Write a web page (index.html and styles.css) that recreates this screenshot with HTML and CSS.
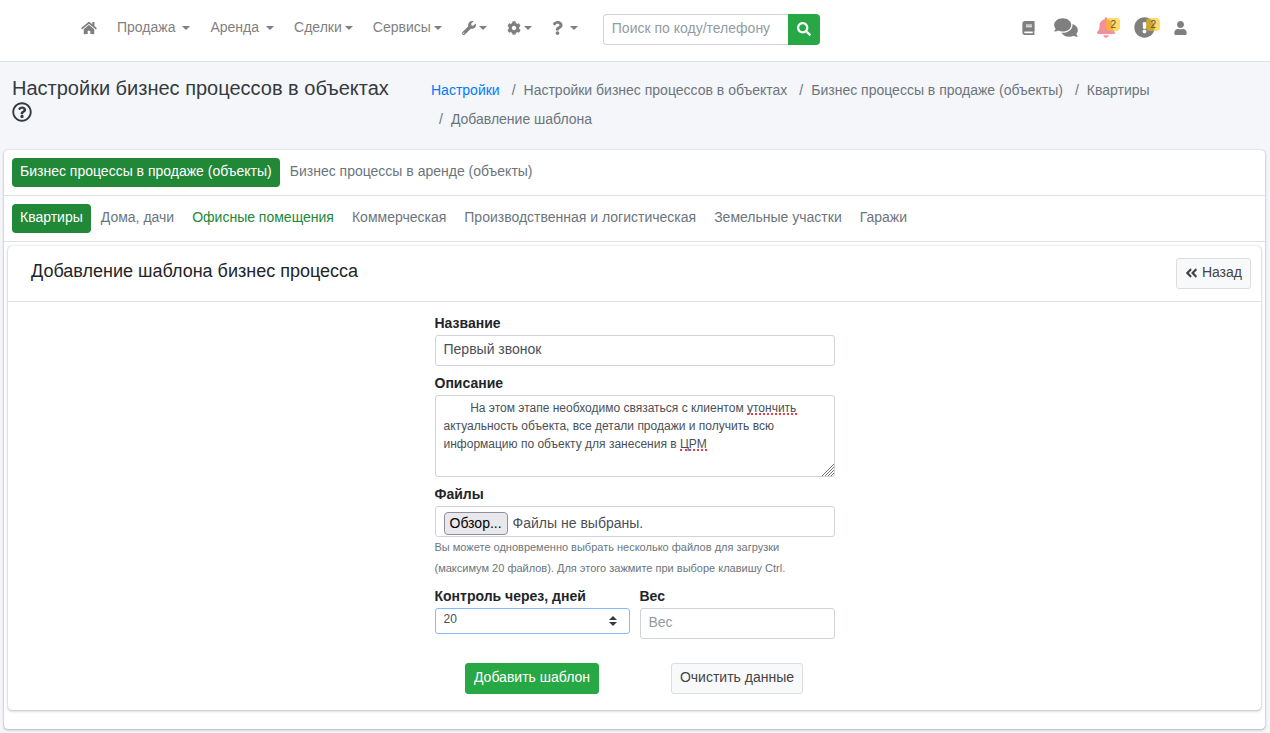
FILE: index.html
```html
<!DOCTYPE html>
<html lang="ru">
<head>
<meta charset="utf-8">
<meta name="viewport" content="width=device-width, initial-scale=1">
<title>Добавление шаблона</title>
<link rel="stylesheet" href="styles.css">
</head>
<body>
<header class="topbar">
  <nav class="menu" aria-label="Главное меню">
    <a class="menu-link" href="#" aria-label="Главная"><svg class="icon icon-home" viewBox="0 0 576 512"><path d="M280.37 148.26L96 300.11V464a16 16 0 0 0 16 16l112.06-.29a16 16 0 0 0 15.92-16V368a16 16 0 0 1 16-16h64a16 16 0 0 1 16 16v95.64a16 16 0 0 0 16 16.05L464 480a16 16 0 0 0 16-16V300L295.67 148.26a12.19 12.19 0 0 0-15.3 0zM571.6 251.47L488 182.56V44.05a12 12 0 0 0-12-12h-56a12 12 0 0 0-12 12v72.61L318.47 43a48 48 0 0 0-61 0L4.34 251.47a12 12 0 0 0-1.6 16.9l25.5 31A12 12 0 0 0 45.15 301l235.22-193.74a12.19 12.19 0 0 1 15.3 0L530.9 301a12 12 0 0 0 16.9-1.6l25.5-31a12 12 0 0 0-1.7-16.93z"/></svg></a>
    <a class="menu-link wide" href="#">Продажа<span class="caret"></span></a>
    <a class="menu-link wide" href="#">Аренда<span class="caret"></span></a>
    <a class="menu-link" href="#">Сделки<span class="caret"></span></a>
    <a class="menu-link" href="#">Сервисы<span class="caret"></span></a>
    <a class="menu-link" href="#" aria-label="Инструменты"><svg class="icon" viewBox="0 0 512 512"><path d="M507.73 109.1c-2.24-9.03-13.54-12.09-20.12-5.51l-74.36 74.36-67.88-11.31-11.31-67.88 74.36-74.36c6.62-6.62 3.43-17.9-5.66-20.16-47.38-11.74-99.55.91-136.58 37.93-39.64 39.64-50.55 97.1-34.05 147.2L18.74 402.76c-24.99 24.99-24.99 65.51 0 90.5 24.99 24.99 65.51 24.99 90.5 0l213.21-213.21c50.12 16.71 107.47 5.68 147.37-34.22 37.07-37.07 49.7-89.32 37.91-136.73zM64 472c-13.25 0-24-10.75-24-24 0-13.26 10.75-24 24-24s24 10.74 24 24c0 13.25-10.75 24-24 24z"/></svg><span class="caret"></span></a>
    <a class="menu-link" href="#" aria-label="Настройки"><svg class="icon" viewBox="0 0 512 512"><path d="M487.4 315.7l-42.6-24.6c4.3-23.2 4.3-47 0-70.2l42.6-24.6c4.9-2.8 7.1-8.6 5.5-14-11.1-35.6-30-67.8-54.7-94.6-3.8-4.1-10-5.1-14.8-2.3L380.8 110c-17.9-15.4-38.5-27.3-60.8-35.1V25.8c0-5.6-3.9-10.5-9.4-11.7-36.7-8.2-74.3-7.8-109.2 0-5.5 1.2-9.4 6.1-9.4 11.7V75c-22.2 7.9-42.8 19.8-60.8 35.1L88.7 85.5c-4.9-2.8-11-1.9-14.8 2.3-24.7 26.7-43.6 58.9-54.7 94.6-1.7 5.4.6 11.2 5.5 14L67.3 221c-4.3 23.2-4.3 47 0 70.2l-42.6 24.6c-4.9 2.8-7.1 8.6-5.5 14 11.1 35.6 30 67.8 54.7 94.6 3.8 4.1 10 5.1 14.8 2.3l42.6-24.6c17.9 15.4 38.5 27.3 60.8 35.1v49.2c0 5.6 3.9 10.5 9.4 11.7 36.7 8.2 74.3 7.8 109.2 0 5.5-1.2 9.4-6.1 9.4-11.7v-49.2c22.2-7.9 42.8-19.8 60.8-35.1l42.6 24.6c4.9 2.8 11 1.9 14.8-2.3 24.7-26.7 43.6-58.9 54.7-94.6 1.5-5.5-.7-11.3-5.6-14.1zM256 336c-44.1 0-80-35.9-80-80s35.9-80 80-80 80 35.9 80 80-35.9 80-80 80z"/></svg><span class="caret"></span></a>
    <a class="menu-link wide" href="#" aria-label="Помощь"><svg class="icon icon-question" viewBox="0 0 384 512"><path d="M202.021 0C122.202 0 70.503 32.703 29.914 91.026c-7.363 10.58-5.093 25.086 5.178 32.874l43.138 32.709c10.373 7.865 25.132 6.026 33.253-4.148 25.049-31.381 43.63-49.449 82.757-49.449 30.764 0 68.816 19.799 68.816 49.631 0 22.552-18.617 34.134-48.993 51.164-35.423 19.86-82.299 44.576-82.299 106.405V320c0 13.255 10.745 24 24 24h72.471c13.255 0 24-10.745 24-24v-5.773c0-42.86 125.268-44.645 125.268-160.627C377.504 66.256 286.902 0 202.021 0zM192 373.459c-38.196 0-69.271 31.075-69.271 69.271 0 38.195 31.075 69.27 69.271 69.27s69.271-31.075 69.271-69.271-31.075-69.27-69.271-69.27z"/></svg><span class="caret"></span></a>
  </nav>
  <form class="search">
    <input class="search-input" type="text" placeholder="Поиск по коду/телефону" aria-label="Поиск по коду или телефону">
    <button class="search-button" type="button" aria-label="Найти"><svg class="icon" viewBox="0 0 512 512"><path d="M505 442.7L405.3 343c-4.5-4.5-10.6-7-17-7H372c27.6-35.3 44-79.7 44-128C416 93.1 322.9 0 208 0S0 93.1 0 208s93.1 208 208 208c48.3 0 92.7-16.4 128-44v16.3c0 6.4 2.5 12.5 7 17l99.7 99.7c9.4 9.4 24.6 9.4 33.9 0l28.3-28.3c9.4-9.4 9.4-24.6.1-34zM208 336c-70.7 0-128-57.2-128-128 0-70.7 57.2-128 128-128 70.7 0 128 57.2 128 128 0 70.7-57.2 128-128 128z"/></svg></button>
  </form>
  <nav class="tools" aria-label="Панель пользователя">
    <a class="tool" href="#" aria-label="Справочник"><svg class="icon icon-book" viewBox="0 0 448 512"><path d="M448 360V24c0-13.3-10.7-24-24-24H96C43 0 0 43 0 96v320c0 53 43 96 96 96h328c13.3 0 24-10.7 24-24v-16c0-7.5-3.5-14.3-8.9-18.7-4.2-15.4-4.2-59.3 0-74.7 5.4-4.3 8.9-11.1 8.9-18.6zM128 134c0-3.3 2.7-6 6-6h212c3.3 0 6 2.7 6 6v20c0 3.3-2.7 6-6 6H134c-3.3 0-6-2.7-6-6v-20zm0 64c0-3.3 2.7-6 6-6h212c3.3 0 6 2.7 6 6v20c0 3.3-2.7 6-6 6H134c-3.3 0-6-2.7-6-6v-20zm253.4 250H96c-17.7 0-32-14.3-32-32 0-17.6 14.4-32 32-32h285.4c-1.9 17.1-1.9 46.9 0 64z"/></svg></a>
    <a class="tool" href="#" aria-label="Сообщения"><svg class="icon icon-comments" viewBox="0 0 576 512"><path d="M416 192c0-88.4-93.1-160-208-160S0 103.6 0 192c0 34.3 14.1 65.9 38 92-13.4 30.2-35.5 54.2-35.8 54.5-2.2 2.3-2.8 5.7-1.5 8.7S4.8 352 8 352c36.6 0 66.9-12.3 88.7-25 32.2 15.7 70.3 25 111.3 25 114.9 0 208-71.6 208-160zm122 220c23.9-26 38-57.7 38-92 0-66.9-53.5-124.2-129.3-148.1.9 6.6 1.3 13.3 1.3 20.1 0 105.9-107.7 192-240 192-10.8 0-21.3-.8-31.7-1.9C207.8 439.6 281.8 480 368 480c41 0 79.1-9.2 111.3-25 21.8 12.7 52.1 25 88.7 25 3.2 0 6.1-1.9 7.3-4.8 1.3-2.9.7-6.3-1.5-8.7-.3-.3-22.4-24.2-35.8-54.5z"/></svg></a>
    <a class="tool" href="#" aria-label="Уведомления"><svg class="icon icon-bell" viewBox="0 0 448 512"><path d="M224 512c35.32 0 63.97-28.65 63.97-64H160.03c0 35.35 28.65 64 63.97 64zm215.39-149.71c-19.32-20.76-55.47-51.99-55.47-154.29 0-77.7-54.48-139.9-127.94-155.16V32c0-17.67-14.32-32-31.98-32s-31.98 14.33-31.98 32v20.84C118.56 68.1 64.08 130.3 64.08 208c0 102.3-36.15 133.53-55.47 154.29-6 6.45-8.66 14.16-8.61 21.71.11 16.4 12.98 32 32.1 32h383.8c19.12 0 32-15.6 32.1-32 .05-7.55-2.61-15.27-8.61-21.71z"/></svg><span class="badge">2</span></a>
    <a class="tool" href="#" aria-label="Предупреждения"><svg class="icon icon-alert" viewBox="0 0 512 512"><path d="M504 256c0 136.997-111.043 248-248 248S8 392.997 8 256C8 119.083 119.043 8 256 8s248 111.083 248 248zm-248 50c-25.405 0-46 20.595-46 46s20.595 46 46 46 46-20.595 46-46-20.595-46-46-46zm-43.673-165.346l7.418 136c.347 6.364 5.609 11.346 11.982 11.346h48.546c6.373 0 11.635-4.982 11.982-11.346l7.418-136c.375-6.874-5.098-12.654-11.982-12.654h-63.383c-6.884 0-12.356 5.78-11.981 12.654z"/></svg><span class="badge">2</span></a>
    <a class="tool" href="#" aria-label="Профиль"><svg class="icon icon-book" viewBox="0 0 448 512"><path d="M224 256c70.7 0 128-57.3 128-128S294.7 0 224 0 96 57.3 96 128s57.3 128 128 128zm89.6 32h-16.7c-22.2 10.2-46.9 16-72.9 16s-50.6-5.8-72.9-16h-16.7C60.2 288 0 348.2 0 422.4V464c0 26.5 21.5 48 48 48h352c26.5 0 48-21.5 48-48v-41.6c0-74.2-60.2-134.4-134.4-134.4z"/></svg></a>
  </nav>
</header>

<main class="page">
  <div class="page-head">
    <h1 class="page-title">Настройки бизнес процессов в объектах
      <svg class="icon icon-help" viewBox="0 0 512 512" role="img" aria-label="Справка"><path d="M256 8C119.043 8 8 119.083 8 256c0 136.997 111.043 248 248 248s248-111.003 248-248C504 119.083 392.957 8 256 8zm0 448c-110.532 0-200-89.431-200-200 0-110.495 89.472-200 200-200 110.491 0 200 89.471 200 200 0 110.53-89.431 200-200 200zm107.244-255.2c0 67.052-72.421 68.084-72.421 92.863V300c0 6.627-5.373 12-12 12h-45.647c-6.627 0-12-5.373-12-12v-8.659c0-35.745 27.1-50.034 47.579-61.516 17.561-9.845 28.324-16.541 28.324-29.579 0-17.246-21.999-28.693-39.784-28.693-23.189 0-33.894 10.977-48.942 29.969-4.057 5.12-11.46 6.071-16.666 2.124l-27.824-21.098c-5.107-3.872-6.251-11.066-2.644-16.363C184.846 131.491 214.94 112 261.794 112c49.071 0 101.45 38.304 101.45 88.8zM298 368c0 23.159-18.841 42-42 42s-42-18.841-42-42 18.841-42 42-42 42 18.841 42 42z"/></svg>
    </h1>
    <ol class="crumbs">
      <li class="crumb"><a class="crumb-link" href="#">Настройки</a></li>
      <li class="crumb">Настройки бизнес процессов в объектах</li>
      <li class="crumb">Бизнес процессы в продаже (объекты)</li>
      <li class="crumb">Квартиры</li>
      <li class="crumb">Добавление шаблона</li>
    </ol>
  </div>

  <section class="card">
    <nav class="tabs" aria-label="Раздел">
      <a class="tab active" href="#">Бизнес процессы в продаже (объекты)</a>
      <a class="tab" href="#">Бизнес процессы в аренде (объекты)</a>
    </nav>
    <nav class="tabs" aria-label="Тип объекта">
      <a class="tab active" href="#">Квартиры</a>
      <a class="tab" href="#">Дома, дачи</a>
      <a class="tab hover" href="#">Офисные помещения</a>
      <a class="tab" href="#">Коммерческая</a>
      <a class="tab" href="#">Производственная и логистическая</a>
      <a class="tab" href="#">Земельные участки</a>
      <a class="tab" href="#">Гаражи</a>
    </nav>

    <section class="panel">
      <div class="panel-head">
        <h2 class="panel-title">Добавление шаблона бизнес процесса</h2>
        <a class="button button-light" href="#"><svg class="icon icon-back" viewBox="0 0 448 512"><path d="M223.7 239l136-136c9.4-9.4 24.6-9.4 33.9 0l22.6 22.6c9.4 9.4 9.4 24.6 0 33.9L319.9 256l96.4 96.4c9.4 9.4 9.4 24.6 0 33.9L393.7 409c-9.4 9.4-24.6 9.4-33.9 0l-136-136c-9.5-9.4-9.5-24.6-.1-34zm-192 34l136 136c9.4 9.4 24.6 9.4 33.9 0l22.6-22.6c9.4-9.4 9.4-24.6 0-33.9L127.9 256l96.4-96.4c9.4-9.4 9.4-24.6 0-33.9L201.7 103c-9.4-9.4-24.6-9.4-33.9 0l-136 136c-9.5 9.4-9.5 24.6-.1 34z"/></svg>Назад</a>
      </div>
      <form class="form">
        <div class="field">
          <label class="label" for="name">Название</label>
          <input class="control" id="name" type="text" value="Первый звонок">
        </div>
        <div class="field">
          <label class="label" for="about">Описание</label>
          <div class="area-wrap">
            <textarea class="control area" id="about" spellcheck="false">        На этом этапе необходимо связаться с клиентом утончить актуальность объекта, все детали продажи и получить всю информацию по объекту для занесения в ЦРМ</textarea>
            <span class="typo typo-first"></span>
            <span class="typo typo-second"></span>
            <svg class="grip" viewBox="0 0 12 12"><path d="M0 12L12 0M3 12l9-9M6 12l6-6M9 12l3-3"/></svg>
          </div>
        </div>
        <div class="field">
          <label class="label" for="files">Файлы</label>
          <div class="control file">
            <span class="file-button">Обзор...</span>
            <span class="file-state">Файлы не выбраны.</span>
            <input class="file-input" id="files" type="file" multiple>
          </div>
          <p class="hint">Вы можете одновременно выбрать несколько файлов для загрузки (максимум 20 файлов). Для этого зажмите при выборе клавишу Ctrl.</p>
        </div>
        <div class="pair">
          <div class="field">
            <label class="label" for="days">Контроль через, дней</label>
            <div class="select-wrap">
              <select class="control select" id="days"><option>20</option></select>
              <svg class="sorter" viewBox="0 0 8 10"><path d="M4 0l4 4H0zM4 10L0 6h8z"/></svg>
            </div>
          </div>
          <div class="field">
            <label class="label" for="weight">Вес</label>
            <input class="control" id="weight" type="text" placeholder="Вес">
          </div>
        </div>
        <div class="pair actions">
          <button class="button button-green" type="button">Добавить шаблон</button>
          <button class="button button-light" type="reset">Очистить данные</button>
        </div>
      </form>
    </section>
  </section>
</main>
</body>
</html>
```
FILE: styles.css
```css
* { box-sizing: border-box; }
body {
  margin: 0;
  background: #f4f6f9;
  color: #212529;
  font-family: "Liberation Sans", Arial, sans-serif;
  font-size: 14px;
  line-height: 21px;
}
a { text-decoration: none; color: inherit; }
input, textarea, select, button { font: inherit; }
.icon { width: 14px; height: 14px; fill: currentColor; flex: none; }

.topbar {
  display: flex;
  align-items: center;
  min-height: 62px;
  padding: 0 83px 6px 81px;
  background: #fff;
  border-bottom: 1px solid #dee2e6;
  color: #7f7f7f;
}
.menu { display: flex; align-items: center; gap: 20px; }
.menu-link { display: flex; align-items: center; gap: 3px; }
.menu-link.wide { gap: 7px; }
.caret { border: 4px solid transparent; border-top-color: currentColor; border-bottom: 0; }
.icon-home { width: 16px; }
.icon-question { width: 11px; }
.search { display: flex; margin: 4px 0 0 25px; }
.search-input {
  width: 185px;
  height: 31px;
  padding: 0 8px 3px;
  border: 1px solid #ced4da;
  border-right: 0;
  border-radius: 4px 0 0 4px;
  background: #fff;
  outline: 0;
}
.search-input::placeholder, .control::placeholder { color: #939ba2; opacity: 1; }
.search-button {
  display: grid;
  place-items: center;
  width: 32px;
  height: 31px;
  padding: 0 0 2px;
  border: 0;
  border-radius: 0 4px 4px 0;
  background: #28a745;
  color: #fff;
}
.tools { display: flex; align-items: center; gap: 19px; margin-left: auto; }
.tool { display: flex; position: relative; }
.icon-book { width: 13px; }
.icon-comments { width: 24px; height: 21px; }
.icon-bell { width: 18px; height: 21px; color: #f2919c; }
.icon-alert { width: 21px; height: 21px; }
.badge {
  position: absolute;
  top: 1px;
  right: -5px;
  padding: 0 4px;
  border-radius: 4px;
  background: rgba(255, 193, 7, .6);
  color: #5c5433;
  font-size: 10px;
  line-height: 13px;
}

.page { padding: 14px 5px 3px 4px; }
.page-head { display: grid; grid-template-columns: 1fr 2fr; padding: 0 8px; }
.page-title { margin: 0; padding-right: 24px; color: #343a40; font-size: 20px; font-weight: 400; line-height: 24px; }
.icon-help { display: inline-block; width: 20px; height: 20px; vertical-align: -3px; }
.crumbs { display: flex; flex-wrap: wrap; column-gap: 4px; margin: 0; padding: 0 90px 16px 4px; list-style: none; }
.crumb { color: #6c757d; line-height: 29px; }
.crumb + .crumb { padding-left: 8px; }
.crumb + .crumb::before { content: "/"; padding-right: 8px; }
.crumb-link { color: #007bff; }

.card {
  padding-bottom: 19px;
  border-radius: 4px;
  background: #fff;
  box-shadow: 0 0 1px rgba(0, 0, 0, .3), 0 1px 3px rgba(0, 0, 0, .25);
}
.tabs { display: flex; flex-wrap: wrap; column-gap: 2px; padding: 8px; border-bottom: 1px solid #dee2e6; }
.tab { padding: 3px 8px 5px; border-radius: 4px; color: #6c757d; }
.tab.active { background: #218838; color: #fff; }
.tab.hover { color: #218838; }

.panel {
  margin: 4px 4px 0;
  border-radius: 4px;
  background: #fff;
  box-shadow: 0 0 1px rgba(0, 0, 0, .3), 0 1px 3px rgba(0, 0, 0, .25);
}
.panel-head {
  display: flex;
  align-items: center;
  justify-content: space-between;
  padding: 12px 10px 12px 23px;
  border-bottom: 1px solid #dee2e6;
}
.panel-title { margin: 0; padding-bottom: 4px; font-size: 18px; font-weight: 400; }
.button {
  display: flex;
  align-items: center;
  gap: 4px;
  height: 31px;
  padding: 0 8px 2px;
  border: 1px solid;
  border-radius: 3px;
}
.button-light { border-color: #ddd; background: #f8f9fa; color: #444; }
.button-green { border-color: #28a745; background: #28a745; color: #fff; }
.icon-back { width: 13px; }

.form { display: flex; flex-direction: column; gap: 7px; width: 400px; max-width: 100%; margin: 0 auto; padding: 11px 0 16px; }
.field { display: flex; flex-direction: column; gap: 2px; }
.label { font-weight: 700; line-height: 20px; }
.control {
  width: 100%;
  height: 31px;
  padding: 0 8px 3px;
  border: 1px solid #ced4da;
  border-radius: 3px;
  background: #fff;
  color: #495057;
  outline: 0;
}
.area-wrap, .select-wrap { display: flex; position: relative; }
.area { height: 82px; padding: 3px 8px; font-size: 12px; line-height: 18px; resize: none; overflow: hidden; }
.typo { position: absolute; border-bottom: 2px dotted #f03a4b; }
.typo-first { left: 312px; top: 18px; width: 50px; }
.typo-second { left: 245px; top: 54px; width: 27px; }
.grip { position: absolute; right: 1px; bottom: 1px; width: 12px; height: 12px; stroke: #777; fill: none; }
.file { display: flex; position: relative; align-items: center; gap: 5px; padding: 3px 8px 0; }
.file-button {
  padding: 0 5px;
  border: 1px solid #8f8f9d;
  border-radius: 4px;
  background: #e9e9ed;
  color: #000;
}
.file-input { position: absolute; inset: 0; width: 100%; opacity: 0; }
.hint { margin: -2px 0 0; color: #6c757d; font-size: 11px; }
.pair { display: grid; grid-template-columns: 1fr 1fr; gap: 10px; align-items: start; }
.select { height: 26px; border-color: #80bdff; appearance: none; font-size: 12px; }
.sorter { position: absolute; right: 13px; top: 8px; width: 8px; height: 10px; fill: #343a40; }
.actions { justify-items: center; margin-top: 17px; }
```
